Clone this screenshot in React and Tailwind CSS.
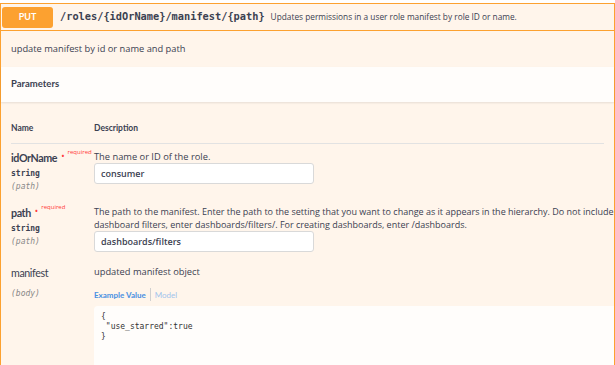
const sans = "font-['Open_Sans','Noto_Sans',sans-serif]";
const head = "font-['Lato','Noto_Sans',sans-serif]";
const mono = "font-['DejaVu_Sans_Mono','Liberation_Mono',monospace]";

const Required = () => (
  <span className="ml-[4px] inline-flex items-start text-[#ff3b3b]">
    <span className="relative top-[1px] text-[9px] leading-[10px]">•</span>
    <span className={`${sans} relative -top-[2px] ml-[3px] text-[6px] leading-[8px]`}>required</span>
  </span>
);

const ParamName = ({ name, type, where, required, bold = true }) => (
  <div className="flex flex-col">
    <div className="flex h-[16px] items-start">
      <span className={`${head} text-[10.7px] leading-[16px] tracking-[-0.4px] text-[#3b4151] ${bold ? 'font-bold' : 'font-normal'}`}>{name}</span>
      {required && <Required />}
    </div>
    {type && <div className={`${mono} mt-[2px] text-[8px] font-bold leading-[12px] text-[#3b4151]`}>{type}</div>}
    <div className={`${mono} ${type ? 'mt-[1px]' : 'mt-[7px]'} text-[8px] italic leading-[12px] text-[#888]`}>{where}</div>
  </div>
);

const Field = ({ value }) => (
  <div className={`${sans} flex h-[21px] w-[220px] items-center rounded-[3px] border border-[#d9d9d9] bg-white px-[6px] text-[9px] font-semibold text-[#3b4151]`}>
    {value}
  </div>
);

export default function App() {
  return (
    <div className="h-[365px] w-[615px] overflow-hidden bg-white pt-[3px] text-[#3b4151]">
      <div className="h-full border-x border-t border-[#fca130] bg-[#fff5eb]">
        {/* header */}
        <div className="flex h-[27px] items-center border-b border-[#fca130] pl-[1px]">
          <div className={`${head} flex h-[21px] w-[51px] items-center justify-center rounded-[3px] bg-[#fca130] text-[9px] font-bold text-white`}>
            PUT
          </div>
          <span className={`${mono} ml-[7px] whitespace-nowrap text-[10.3px] font-bold text-[#3b4151]`}>
            /roles/{'{idOrName}'}/manifest/{'{path}'}
          </span>
          <span className={`${sans} ml-[6px] whitespace-nowrap text-[8.3px] text-[#3b4151]`}>
            Updates permissions in a user role manifest by role ID or name.
          </span>
        </div>

        {/* description */}
        <div className={`${sans} flex h-[36px] items-center px-[10px] text-[9.3px]`}>
          update manifest by id or name and path
        </div>

        {/* parameters bar */}
        <div className="flex h-[35px] items-center bg-[#fffdfb] px-[10px] shadow-[0_1px_2px_rgba(0,0,0,0.1)]">
          <span className={`${head} text-[9.5px] font-bold`}>Parameters</span>
        </div>

        {/* table */}
        <div className="px-[10px]">
          <div className={`${head} mt-[20px] flex h-[22px] items-start border-b border-[#e2e2e2] text-[8.5px] font-bold`}>
            <span className="w-[83px]">Name</span>
            <span>Description</span>
          </div>

          <div className="grid grid-cols-[83px_1fr] pt-[6px]">
            <ParamName name="idOrName" type="string" where="(path)" required />
            <div className="flex flex-col">
              <div className={`${sans} text-[9.3px] leading-[13px]`}>The name or ID of the role.</div>
              <Field value="consumer" />
            </div>
          </div>

          <div className="grid grid-cols-[83px_1fr] pt-[12px]">
            <ParamName name="path" type="string" where="(path)" required />
            <div className="flex flex-col">
              <div className={`${sans} whitespace-nowrap text-[9px] leading-[13px]`}>
                The path to the manifest. Enter the path to the setting that you want to change as it appears in the hierarchy. Do not include
              </div>
              <div className={`${sans} whitespace-nowrap text-[9px] leading-[13px]`}>
                dashboard filters, enter dashboards/filters/. For creating dashboards, enter /dashboards.
              </div>
              <Field value="dashboards/filters" />
            </div>
          </div>

          <div className="grid grid-cols-[83px_1fr] pt-[13px]">
            <ParamName name="manifest" where="(body)" bold={false} />
            <div className="flex flex-col">
              <div className={`${sans} text-[9.3px] leading-[13px]`}>updated manifest object</div>
              <div className={`${head} mt-[10px] flex h-[13px] items-center text-[8px] font-bold`}>
                <span className="text-[#4990e2]">Example Value</span>
                <span className="mx-[4px] h-[13px] w-px bg-[#d0d0d0]" />
                <span className="font-normal text-[#9fc3ec]">Model</span>
              </div>
              <div className={`${mono} -mr-[10px] mt-[5px] h-[80px] rounded-tl-[4px] bg-[#fffdfb] px-[7px] pt-[6px] text-[8px] leading-[10px] text-[#333]`}>
                <div>{'{'}</div>
                <div>&nbsp;"use_starred":true</div>
                <div>{'}'}</div>
              </div>
            </div>
          </div>
        </div>
      </div>
    </div>
  );
}
